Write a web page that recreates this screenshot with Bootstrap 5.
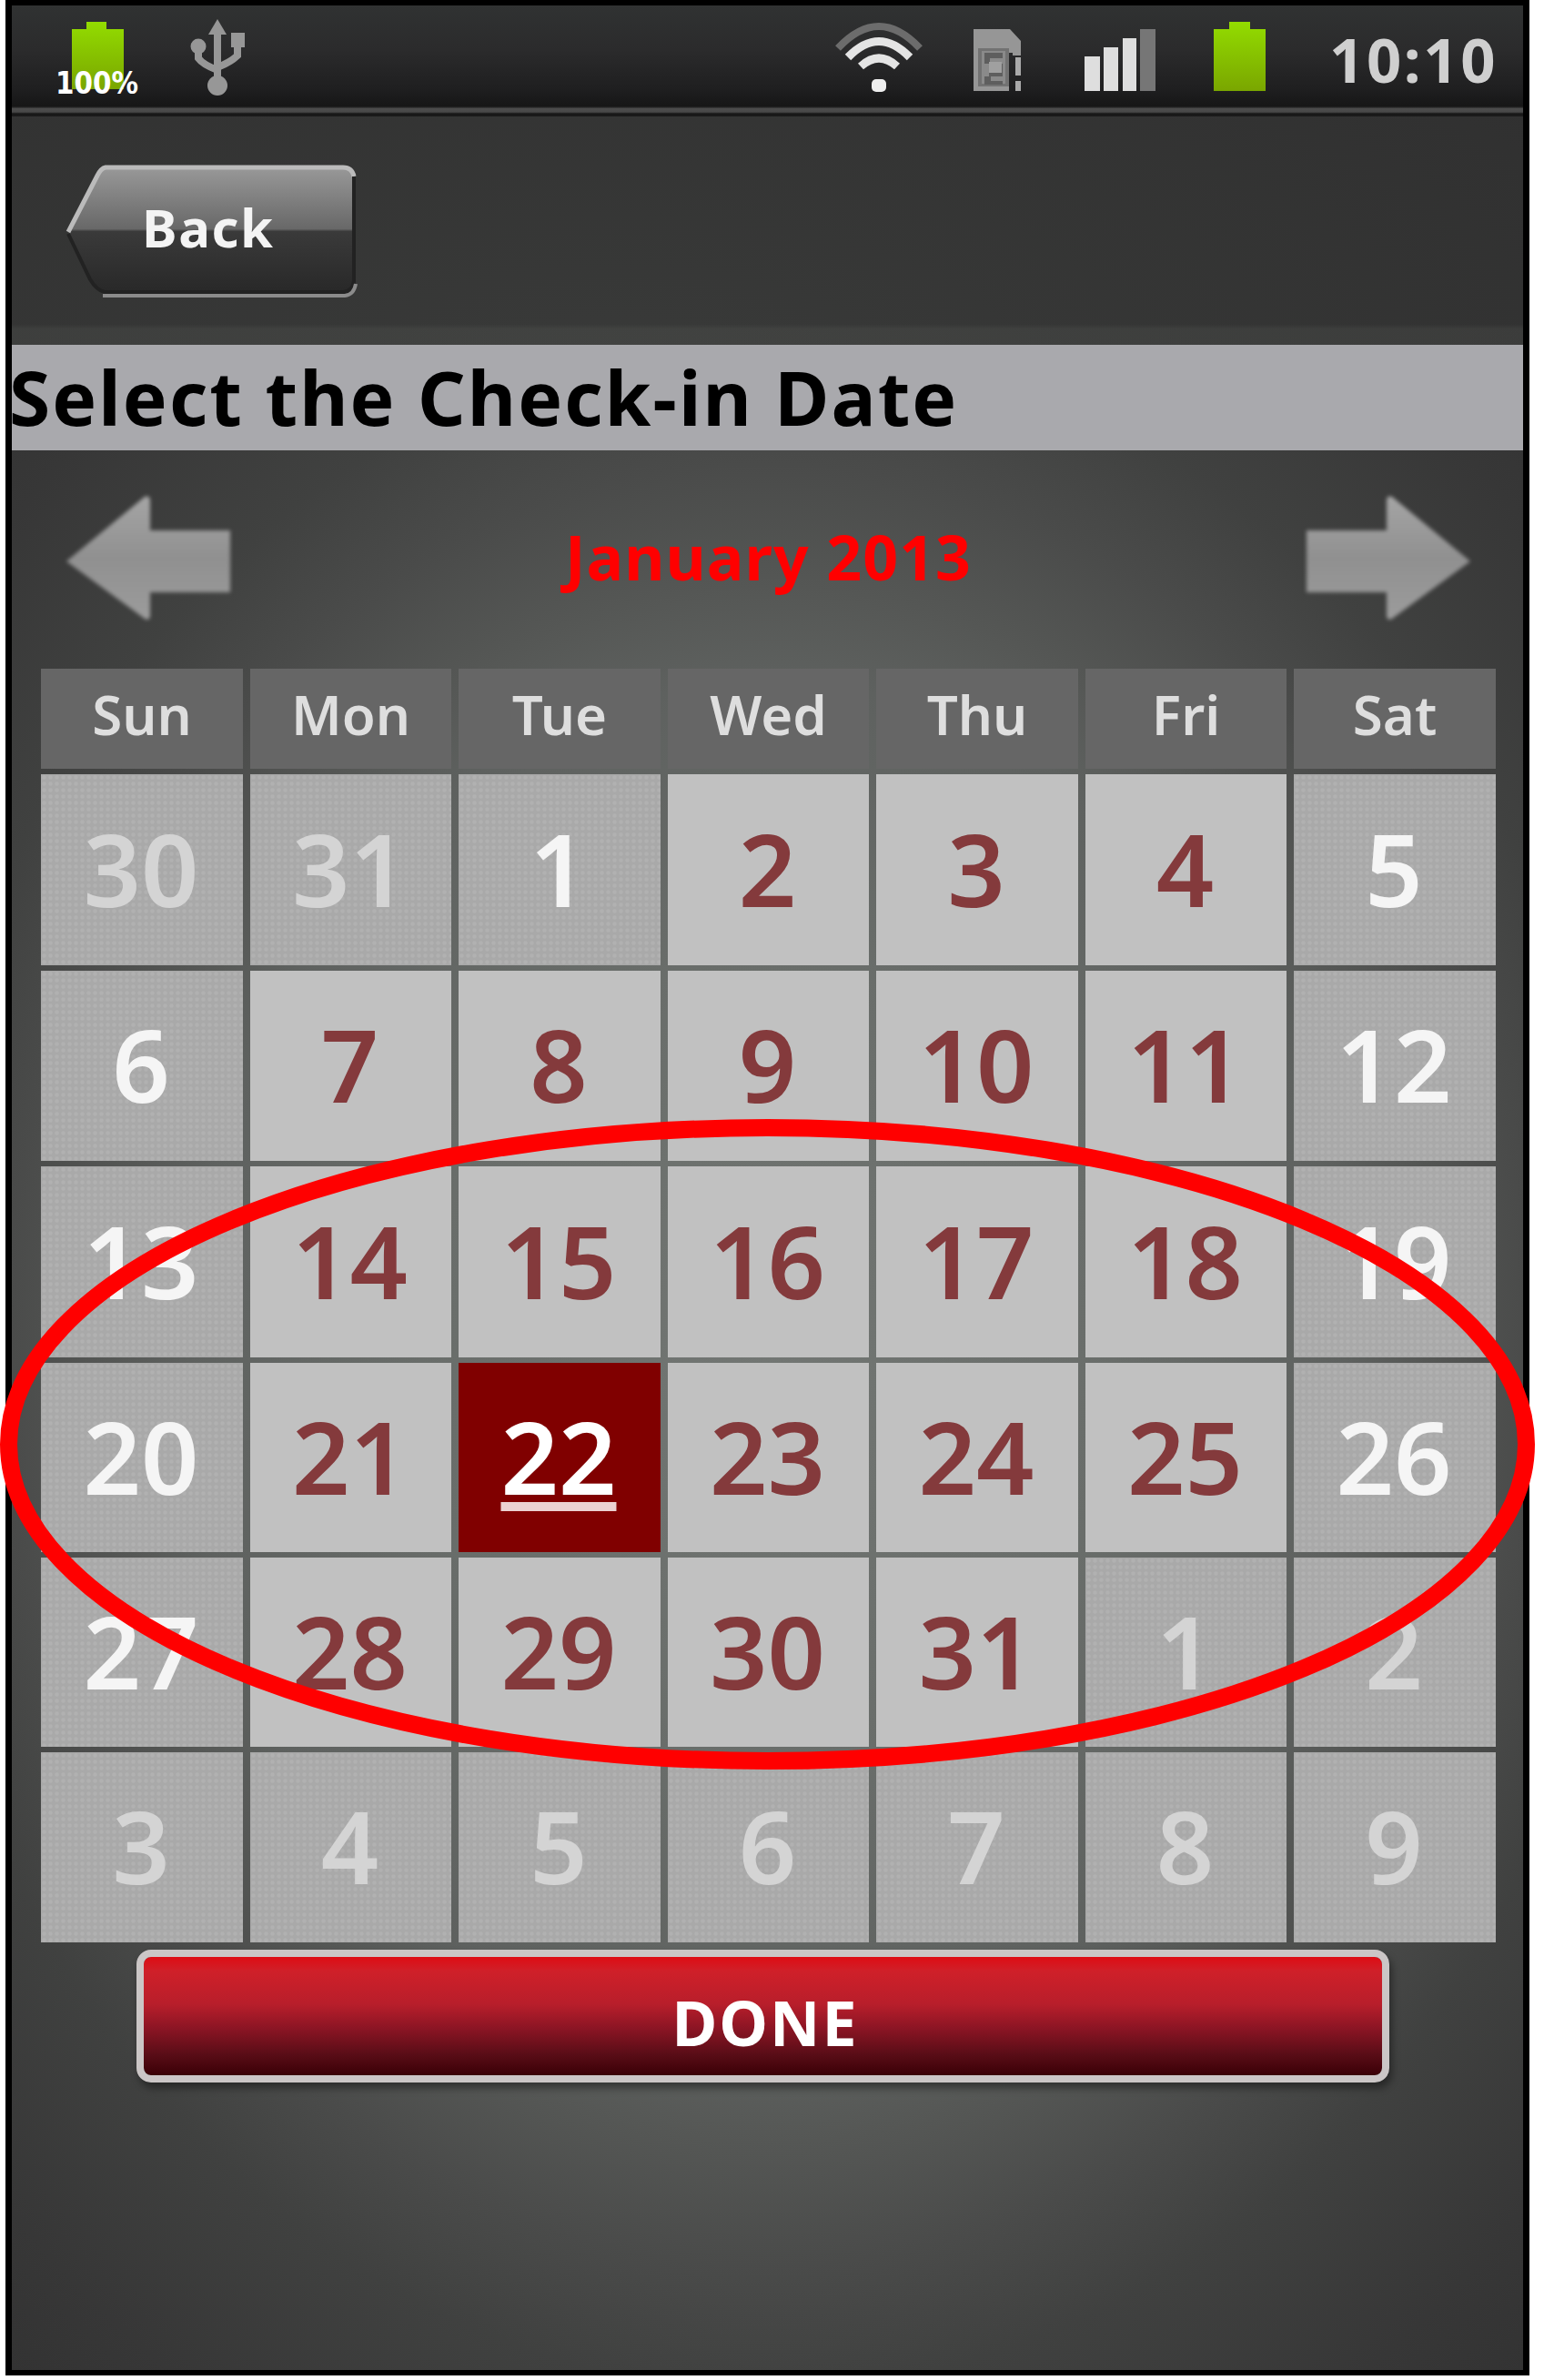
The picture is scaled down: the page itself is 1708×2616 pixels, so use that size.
<!DOCTYPE html>
<html lang="en">
<head>
<meta charset="utf-8">
<meta name="viewport" content="width=device-width, initial-scale=1">
<title>Select the Check-in Date</title>
<link href="https://cdn.jsdelivr.net/npm/bootstrap@5.3.0/dist/css/bootstrap.min.css" rel="stylesheet">
<style>
  body { background: #fff; font-family: "Noto Sans", "Open Sans", sans-serif; overflow: hidden; }
  .phone {
    width: 1675px; height: 2611px; margin-left: 6px; border: 7px solid #000; border-top-width: 6px; border-bottom-width: 6px;
    background: radial-gradient(ellipse 1270px 1500px at 50% 1494px, #727673 0, #696d6a 30%, #5e615f 50%, #555755 57%, #4a4b4a 66%, #404140 75%, #373737 90%, #303030 105%);
  }
  .statusbar { height: 122px; padding: 0 27px 8px 42px; background: linear-gradient(#303232 0, #2b2b2c 40%, #1f1f20 75%, #161616 91%, #4c4c4c 93%, #484848 96%, #161616 97.5%, #1c1c1c 100%); }
  .statusbar svg { display: block; flex: none; }
  .clock { font-size: 67px; font-weight: 700; letter-spacing: 2.6px; line-height: 1; color: #cfcfcf; width: 186px; white-space: nowrap; }
  .topnav { height: 251px; padding: 52px 0 0 58px; background: linear-gradient(transparent 91%, rgba(110,114,108,.16) 93%), radial-gradient(ellipse 1300px 500px at 40% 110%, #393a39, #303030); }
  .back { width: 324px; height: 150px; }
  .back svg { display: block; }
  .back-label { position: absolute; left: 85px; top: 32px; font-size: 58px; line-height: 76px; font-weight: 700; letter-spacing: 1.6px; color: #f4f4f4; }
  .titlebar { height: 116px; background: #a9a9ad; color: #000; font-size: 82px; line-height: 115px; font-weight: 700; letter-spacing: 2.1px; text-indent: -3px; white-space: nowrap; }
  .monthbar { height: 240px; padding: 43px 54px 0 56px; }
  .month { color: #f00; font-size: 68px; line-height: 76px; font-weight: 700; letter-spacing: 1px; padding-top: 36px; }
  .cal { width: 1599px; margin-left: 32px; display: grid; grid-template-columns: repeat(7, 1fr); column-gap: 7.6px; grid-template-rows: 110px 210px 209px 210px 208px 208px 209px; row-gap: 6px; }
  .cal > * { display: flex; align-items: center; justify-content: center; font-weight: 600; }
  .dow { background-color: #666; color: #dedede; font-size: 60px; padding-bottom: 11px; line-height: 1; }
  .day { font-size: 111px; background-color: #c1c1c1; color: #843a3c; line-height: 1; padding: 0 2px 4px 0; }
  .off, .out { background-color: #a9a9a9; color: #f5f5f5; background-image: radial-gradient(circle, rgba(255,255,255,.09) 0 1.5px, transparent 3px); background-size: 7px 7px; }
  .out { color: #d4d4d4; }
  .picked { background: #800000; color: #fff; }
  .picked u { text-decoration-color: #ecd2d2; text-decoration-thickness: 10px; text-underline-offset: 8px; }
  .done { width: 1377px; height: 146px; margin: 8px 0 0 137px; border: 8px solid #cbc6c6; border-radius: 16px; color: #fff; font-size: 68px; font-weight: 700; letter-spacing: 2px; line-height: 1; padding: 14px 0 0 5px;
    background: linear-gradient(#de0c14 0, #cf2029 12%, #b81e2b 40%, #8c1524 60%, #5a0d17 82%, #3a0006 100%) padding-box; box-shadow: 3px 6px 8px rgba(0,0,0,.4); }
  .ring { position: absolute; left: 0; top: 1220px; pointer-events: none; }
</style>
</head>
<body>
<main class="phone position-relative d-flex flex-column">
  <header class="statusbar d-flex">
    <svg width="104" height="106" viewBox="-6 0 104 106"><defs><linearGradient id="g" x2="0" y2="1"><stop stop-color="#93dc00"/><stop offset="1" stop-color="#7aa600"/></linearGradient></defs><path d="M18 26h16v-8h22v8h19v66H18z" fill="url(#g)"/><text x="0" y="97" textLength="91" lengthAdjust="spacingAndGlyphs" font-family="DejaVu Sans" font-weight="700" font-size="33" fill="#fff">100%</text></svg>
    <svg width="62" height="106" viewBox="0 0 62 106" style="margin-left:50px"><g fill="none" stroke="#979797" stroke-width="8"><path d="M30 24v64M9 44v14q5 7 21 13M52 40v15q-7 7-22 13"/></g><g fill="#979797"><path d="M30 15l10 17H20z"/><circle cx="30" cy="88" r="11"/><circle cx="9" cy="45" r="8.500"/><path d="M45 30h15v16H45z"/></g></svg>
    <div class="d-flex ms-auto">
      <svg width="96" height="106" viewBox="0 0 96 106"><g fill="none" stroke-width="8"><path d="M3 47Q48-1 93 47" stroke="#6c6c6c"/><path d="M14 57q34-35 68 0" stroke="#e4e4e4" stroke-width="9"/><path d="M28 67q20-18 40 0" stroke="#e4e4e4" stroke-width="9"/></g><rect x="40" y="81" width="16" height="14" rx="5" fill="#eee"/></svg>
      <svg width="54" height="106" viewBox="0 0 54 106" style="margin-left:56px"><path d="M0 26h40l12 13v16h-9v-3h-4v42H0z" fill="#969696"/><path d="M5 47h34v42H5z" fill="#727272"/><path d="M9 50h26v36H9z" fill="#8a8a8a"/><path d="M12 52h20v6H18v6h14v14H19v5h13v4H12V78h5V64h-5z" fill="#5e5e5e"/><path d="M17 62h14v12H17z" fill="#a0a0a0"/><path d="M46 57h6v20h-6zM46 83h6v11h-6z" fill="#aaa"/></svg>
      <svg width="80" height="106" viewBox="0 0 80 106" style="margin-left:68px"><path d="M0 56h17v38H0zM21 46h16v48H21zM42 36h15v58H42z" fill="#dedede"/><path d="M61 26h17v68H61z" fill="#767676"/></svg>
      <svg width="60" height="106" viewBox="0 0 60 106" style="margin-left:61px"><path d="M1 26h17v-8h23v8h17v68H1z" fill="url(#g)"/></svg>
      <span class="clock" style="margin:26px 0 0 68px">10:10</span>
    </div>
  </header>
  <nav class="topnav">
    <div class="back position-relative">
      <svg width="324" height="150" viewBox="0 0 324 150"><defs><linearGradient id="b" x2="0" y2="1"><stop stop-color="#999"/><stop offset=".49" stop-color="#686868"/><stop offset=".51" stop-color="#3a3a3a"/><stop offset="1" stop-color="#282828"/></linearGradient></defs><path d="M44 3H306q12 0 12 12v116q0 12-12 12H44Q34 139 28 129L4 77 35 13q4-8 9-10z" fill="url(#b)"/><path d="M4 75L36 13q4-8 9-9H306q10 0 12 10" fill="none" stroke="#bbb" stroke-width="5"/><path d="M4 77L28 127q7 12 16 14H306q11-1 12-12V14" fill="none" stroke="#222" stroke-width="4"/><path d="M42 145H308q10-1 12-13" fill="none" stroke="#8b8b8b" stroke-width="4"/></svg>
      <span class="back-label">Back</span>
    </div>
  </nav>
  <h1 class="titlebar m-0">Select the Check-in Date</h1>
  <div class="monthbar d-flex justify-content-between align-items-start">
    <svg width="188" height="150" viewBox="0 0 188 150"><defs><linearGradient id="a" x2="0" y2="1"><stop stop-color="#a5a5a5"/><stop offset=".5" stop-color="#909090"/><stop offset="1" stop-color="#9c9c9c"/></linearGradient><filter id="soft"><feGaussianBlur stdDeviation="2"/></filter></defs><path d="M4 79L90 8q6-2 6 5v32h88v68H96v26q-1 6-6 3z" fill="url(#a)" filter="url(#soft)"/></svg>
    <div class="month">January 2013</div>
    <svg width="188" height="150" viewBox="0 0 188 150"><path d="M184 79L98 8q-6-2-6 5v32H4v68h88v26q1 6 6 3z" fill="url(#a)" filter="url(#soft)"/></svg>
  </div>
  <section class="cal">
    <div class="dow">Sun</div><div class="dow">Mon</div><div class="dow">Tue</div><div class="dow">Wed</div><div class="dow">Thu</div><div class="dow">Fri</div><div class="dow">Sat</div>
    <div class="day out">30</div><div class="day out">31</div><div class="day off">1</div><div class="day">2</div><div class="day">3</div><div class="day">4</div><div class="day off">5</div>
    <div class="day off">6</div><div class="day">7</div><div class="day">8</div><div class="day">9</div><div class="day">10</div><div class="day">11</div><div class="day off">12</div>
    <div class="day off">13</div><div class="day">14</div><div class="day">15</div><div class="day">16</div><div class="day">17</div><div class="day">18</div><div class="day off">19</div>
    <div class="day off">20</div><div class="day">21</div><div class="day picked"><u>22</u></div><div class="day">23</div><div class="day">24</div><div class="day">25</div><div class="day off">26</div>
    <div class="day off">27</div><div class="day">28</div><div class="day">29</div><div class="day">30</div><div class="day">31</div><div class="day out">1</div><div class="day out">2</div>
    <div class="day out">3</div><div class="day out">4</div><div class="day out">5</div><div class="day out">6</div><div class="day out">7</div><div class="day out">8</div><div class="day out">9</div>
  </section>
  <button class="btn done" type="button">DONE</button>
</main>
<svg class="ring" width="1690" height="740" viewBox="0 1220 1690 740"><ellipse cx="843.500" cy="1587.500" rx="834" ry="348" fill="none" stroke="#f00" stroke-width="19"/></svg>
<script src="https://cdn.jsdelivr.net/npm/bootstrap@5.3.0/dist/js/bootstrap.bundle.min.js"></script>
</body>
</html>
